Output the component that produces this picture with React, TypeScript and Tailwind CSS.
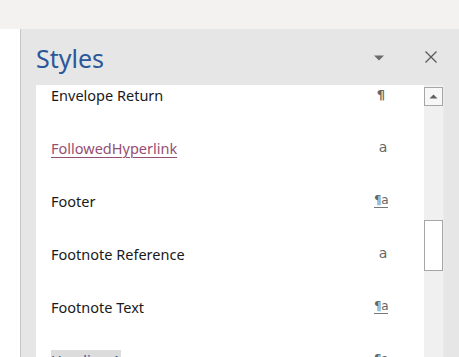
import { ReactNode } from "react";

type StyleRow = {
  name: string;
  kind: "para" | "char" | "linked";
  className?: string;
};

const rows: StyleRow[] = [
  { name: "Envelope Return", kind: "para" },
  {
    name: "FollowedHyperlink",
    kind: "char",
    className: "text-[#954f72] underline underline-offset-[3px] decoration-1",
  },
  { name: "Footer", kind: "linked" },
  { name: "Footnote Reference", kind: "char" },
  { name: "Footnote Text", kind: "linked" },
  {
    name: "Heading 1",
    kind: "linked",
    className: "text-[#2f5597] bg-[#dcdcdc]",
  },
];

const KindIcon = ({ kind }: { kind: StyleRow["kind"] }) => {
  let glyph: ReactNode;
  if (kind === "para") glyph = <span className="text-[13px] font-bold">¶</span>;
  else if (kind === "char") glyph = <span className="ml-1 text-[14px]">a</span>;
  else
    glyph = (
      <span className="border-b border-[#777] text-[12px] leading-[13px] tracking-[-0.5px]">
        ¶a
      </span>
    );
  return (
    <div className="flex w-[30px] justify-center font-['DejaVu_Sans',sans-serif] text-[#666666]">
      {glyph}
    </div>
  );
};

const App = () => {
  return (
    <div className="flex h-[357px] w-[459px] flex-col overflow-hidden bg-[#f3f2f1] font-['Noto_Sans',sans-serif]">
      <div className="h-[29px] shrink-0" />
      <div className="flex min-h-0 flex-1">
        <div className="w-[20px] shrink-0 bg-white" />
        <div className="flex min-w-0 flex-1 flex-col border-l border-[#c6c6c6] bg-[#e6e6e6] pl-[15px]">
          <div className="flex h-[56px] shrink-0 items-start pt-[12px]">
            <h1 className="flex-1 text-[25px] leading-[34px] text-[#2b579a]">
              Styles
            </h1>
            <svg width="12" height="8" viewBox="0 0 12 8" className="mr-[39px] mt-[13px]">
              <path d="M1 1.5 H11 L6 6.5 Z" fill="#6a6a6a" />
            </svg>
            <svg width="14" height="14" viewBox="0 0 14 14" className="mr-[21px] mt-[9px]">
              <path d="M1.5 1.5 L12.5 12.5 M12.5 1.5 L1.5 12.5" stroke="#5a5a5a" strokeWidth="1.3" />
            </svg>
          </div>

          <div className="flex min-h-0 flex-1 pr-[15px]">
            <div className="min-w-0 flex-1 overflow-hidden bg-white">
              <div className="-mt-[17px]">
                {rows.map((row) => (
                  <div key={row.name} className="flex h-[53px] items-center pl-[15px] pr-[28px]">
                    <div className="flex-1">
                      <span className={`text-[14.5px] leading-[22px] text-[#1a1a1a] ${row.className ?? ""}`}>
                        {row.name}
                      </span>
                    </div>
                    <KindIcon kind={row.kind} />
                  </div>
                ))}
              </div>
            </div>

            <div className="flex w-[20px] shrink-0 flex-col border-r border-[#ebebeb] bg-[#f0f0f0]">
              <div className="mt-[2px] flex h-[19px] items-center justify-center border border-[#a6a6a6] bg-[#f7f7f7]">
                <svg width="9" height="5" viewBox="0 0 9 5">
                  <path d="M0.5 4.5 L4.5 0.5 L8.5 4.5 Z" fill="#606060" />
                </svg>
              </div>
              <div className="mt-[114px] h-[51px] border border-[#a6a6a6] bg-white" />
            </div>
          </div>
        </div>
      </div>
    </div>
  );
};

export default App;
